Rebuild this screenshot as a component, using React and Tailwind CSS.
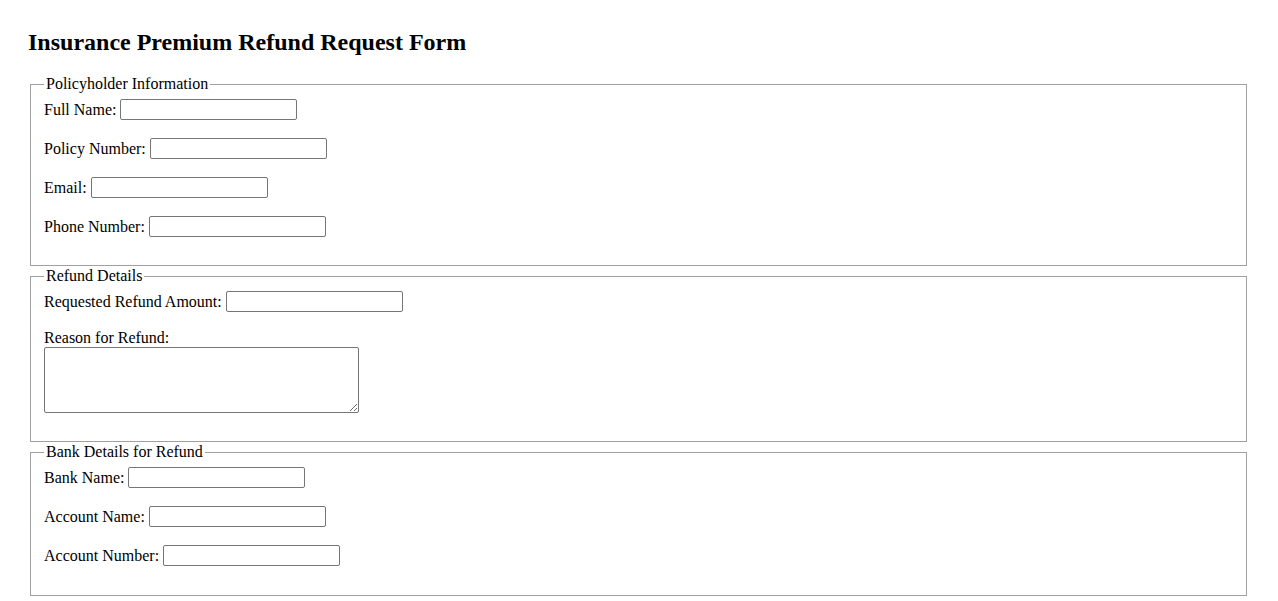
const fieldsetCls =
  "border border-solid border-[#a0a0a0] pl-[13px] pr-[13px] pt-[5px] min-w-0";
const legendCls = "px-[2px] text-base leading-[18px]";
const inputCls =
  "w-[177px] h-[21px] border border-[#767676] rounded-[2px] bg-white px-[2px] text-[13px] outline-none";

function Field({ label }) {
  return (
    <div className="flex items-center gap-1 h-[23px]">
      <label>{label}</label>
      <input type="text" className={inputCls} />
    </div>
  );
}

export default function App() {
  return (
    <div
      className="bg-white text-black min-h-screen px-[28px] pt-[28px] text-base"
      style={{ fontFamily: '"Liberation Serif", "Times New Roman", serif' }}
    >
      <h1 className="text-[24px] font-bold leading-[28px] mb-[19px]">
        Insurance Premium Refund Request Form
      </h1>

      <form className="ml-[2px] mr-[3px] flex flex-col gap-px">
        {/* Policyholder */}
        <fieldset className={`${fieldsetCls} pb-[27px]`}>
          <legend className={legendCls}>Policyholder Information</legend>
          <div className="flex flex-col gap-4">
            <Field label="Full Name:" />
            <Field label="Policy Number:" />
            <Field label="Email:" />
            <Field label="Phone Number:" />
          </div>
        </fieldset>

        {/* Refund */}
        <fieldset className={`${fieldsetCls} pb-[28px]`}>
          <legend className={legendCls}>Refund Details</legend>
          <div className="flex flex-col gap-4">
            <Field label="Requested Refund Amount:" />
            <div className="flex flex-col">
              <label className="leading-[18px]">Reason for Refund:</label>
              <textarea className="w-[315px] h-[66px] border border-[#767676] rounded-[2px] bg-white outline-none" />
            </div>
          </div>
        </fieldset>

        {/* Bank */}
        <fieldset className={`${fieldsetCls} pb-[28px]`}>
          <legend className={legendCls}>Bank Details for Refund</legend>
          <div className="flex flex-col gap-4">
            <Field label="Bank Name:" />
            <Field label="Account Name:" />
            <Field label="Account Number:" />
          </div>
        </fieldset>
      </form>
    </div>
  );
}
